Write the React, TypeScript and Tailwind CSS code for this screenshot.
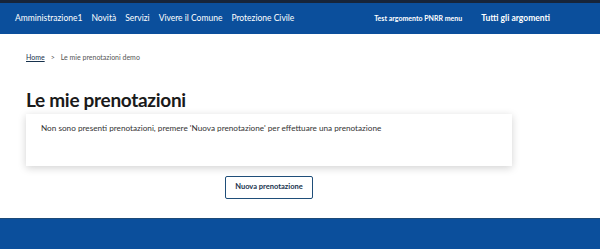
import React from "react";

const navItems = ["Amministrazione1", "Novità", "Servizi", "Vivere il Comune", "Protezione Civile"];

const App = () => {
  return (
    <div className="w-[600px] h-[249px] bg-white flex flex-col overflow-hidden" style={{ fontFamily: "Lato, 'Open Sans', sans-serif" }}>
      <div className="h-[3px] bg-[#17253a]" />
      <header className="h-[31px] bg-[#0b4f9c] flex items-center pl-[15px] pr-[50px] text-white">
        <nav className="flex items-center gap-[9px] text-[8.5px] font-normal">
          {navItems.map((item) => (
            <span key={item}>{item}</span>
          ))}
        </nav>
        <div className="ml-auto flex items-center gap-[19px]">
          <span className="text-[7px] font-bold">Test argomento PNRR menu</span>
          <span className="text-[8.5px] font-bold">Tutti gli argomenti</span>
        </div>
      </header>

      <main className="flex-1 flex flex-col px-[26px]">
        <div className="flex items-center gap-[6px] text-[7px] text-[#555] mt-[18px]">
          <span className="underline text-[#17324d]">Home</span>
          <span>&gt;</span>
          <span>Le mie prenotazioni demo</span>
        </div>

        <h1 className="mt-[27px] text-[19px] font-bold text-[#1a1a1a] leading-none tracking-[-0.3px]">Le mie prenotazioni</h1>

        <div className="mt-[5px] w-[486px] h-[52px] bg-white shadow-[0_2px_8px_rgba(0,0,0,0.18)] px-[15px] pt-[10px]">
          <p className="text-[8.2px] text-[#333] leading-none">
            Non sono presenti prenotazioni, premere 'Nuova prenotazione' per effettuare una prenotazione
          </p>
        </div>

        <div className="flex justify-center w-[486px] mt-[10px]">
          <button className="w-[88px] h-[23px] border border-[#1f4e79] rounded-[2px] text-[7.5px] font-bold text-[#17324d] bg-white">
            Nuova prenotazione
          </button>
        </div>
      </main>

      <footer className="h-[31px] bg-[#0b4f9c] border-t border-[#1d4a78]" />
    </div>
  );
};

export default App;
